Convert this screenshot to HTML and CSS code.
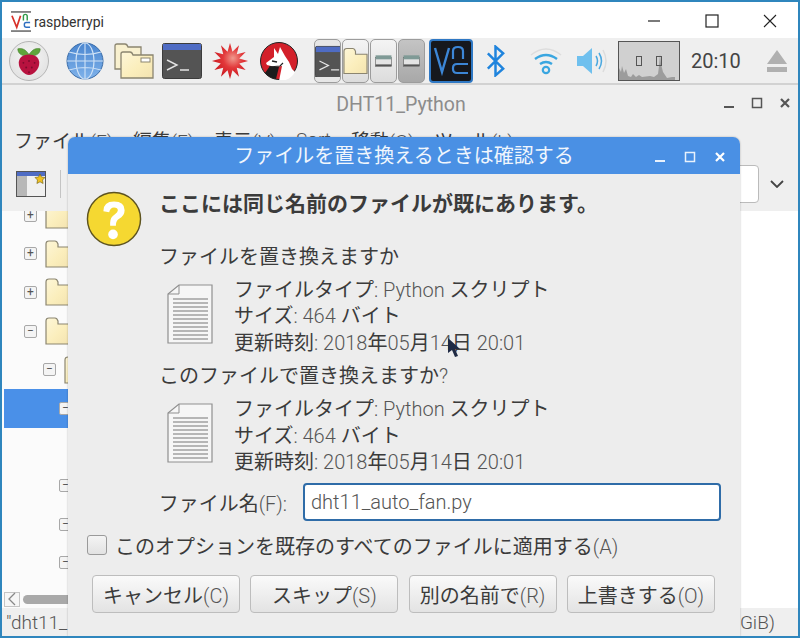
FILE: index.html
```html
<!DOCTYPE html>
<html lang="ja">
<head>
<meta charset="utf-8">
<title>raspberrypi</title>
<link rel="stylesheet" href="styles.css">
</head>
<body>
<svg class="defs" width="0" height="0">
  <defs>
    <linearGradient id="folderFill" x1="0" y1="0" x2="1" y2="1">
      <stop offset="0" stop-color="#fdf6d8"/><stop offset=".55" stop-color="#fbeebc"/><stop offset="1" stop-color="#f3e3b0"/>
    </linearGradient>
    <radialGradient id="starFill" cx=".58" cy=".42" r=".6">
      <stop offset="0" stop-color="#f09a8e"/><stop offset=".45" stop-color="#e2383a"/><stop offset="1" stop-color="#c8141c"/>
    </radialGradient>
    <linearGradient id="globeFill" x1="0" y1="0" x2="0" y2="1">
      <stop offset="0" stop-color="#4a86d0"/><stop offset="1" stop-color="#7fb2ea"/>
    </linearGradient>
    <symbol id="term" viewBox="0 0 40 36">
      <rect x=".5" y=".5" width="39" height="35" rx="2" fill="#545454" stroke="#3c3c3c"/>
      <rect x="1" y="1" width="38" height="6" fill="#4f6cc4"/>
      <path d="M5 17l10 5-10 5M18 27h9" fill="none" stroke="#e4e4e4" stroke-width="1.4"/>
    </symbol>
    <symbol id="folder" viewBox="0 0 26 28">
      <path d="M1 4q0-3 3-3h6q2 0 3 3v3h12v20H1z" fill="url(#folderFill)" stroke="#8b8570" stroke-width="1.2"/>
    </symbol>
    <symbol id="doc" viewBox="0 0 46 60">
      <path d="M12 1h33v58H1V10z" fill="#f6f6f6" stroke="#8f8f8f" stroke-width="1.2"/>
      <path d="M12 1v9H1" fill="none" stroke="#8f8f8f"/>
      <path d="M6 15h35M6 19h35M6 23h35M6 27h35M6 31h35M6 35h35M6 39h35M6 43h35M6 47h35M6 51h35M6 55h35" stroke="#777" stroke-width="1.1"/>
    </symbol>
    <symbol id="winfolder" viewBox="0 0 30 24">
      <rect x="1" y="6" width="28" height="16" fill="#e4e4e4" stroke="#555" stroke-width="1"/>
      <rect x="1" y="2" width="28" height="7" fill="#7f9a96"/>
      <rect x="1" y="18" width="28" height="3" fill="#555"/>
    </symbol>
  </defs>
</svg>

<div class="screen">
  <header class="host-title">
    <svg class="vnc-logo" viewBox="0 0 22 22" width="21" height="21">
      <path d="M0 1h21" stroke="#333" stroke-width="1.2"/>
      <path d="M0 21h21" stroke="#333" stroke-width="1.2"/>
      <path d="M1 5l5 12 4-12" fill="none" stroke="#d8322a" stroke-width="1.8"/>
      <path d="M13 10V5.500q0-2 2-2t2 2V10" fill="none" stroke="#2f9a48" stroke-width="1.5"/>
      <path d="M20 12h-4q-2 0-2 2v1q0 2 2 2h4" fill="none" stroke="#2e6fc0" stroke-width="1.5"/>
    </svg>
    <span class="host-name">raspberrypi</span>
    <div class="host-controls">
      <svg class="host-btn" viewBox="0 0 14 14" width="14" height="14"><path d="M1 7h12" stroke="#222" stroke-width="1.2"/></svg>
      <svg class="host-btn max" viewBox="0 0 14 14" width="14" height="14"><rect x="1" y="1" width="12" height="12" fill="none" stroke="#222" stroke-width="1.2"/></svg>
      <svg class="host-btn close" viewBox="0 0 14 14" width="14" height="14"><path d="M1 1l12 12M13 1L1 13" stroke="#222" stroke-width="1.1"/></svg>
    </div>
  </header>

  <nav class="panel">
    <span class="menu-btn">
      <svg viewBox="0 0 30 32" width="28" height="30">
        <path d="M15 9C11 3 7 2 3 3c0 5 4 8 12 8 8 0 12-3 12-8-4-1-8 0-12 6z" fill="#5fa53b" stroke="#3e7a28" stroke-width=".6"/>
        <path d="M15 9c-6 0-11 3-11 9 0 7 6 13 11 13s11-6 11-13c0-6-5-9-11-9z" fill="#b8123f"/>
        <g fill="#7d0b2c"><circle cx="15" cy="16" r="1"/><circle cx="9" cy="18" r="1"/><circle cx="21" cy="18" r="1"/><circle cx="12" cy="23" r="1"/><circle cx="18" cy="23" r="1"/><circle cx="15" cy="28" r="1"/></g>
      </svg>
    </span>
    <svg class="p-globe" viewBox="0 0 38 38" width="38" height="38">
      <circle cx="19" cy="19" r="18" fill="url(#globeFill)" stroke="#3a6ca8"/>
      <g fill="none" stroke="#cfe2f6" stroke-width="1.1"><ellipse cx="19" cy="19" rx="9" ry="18"/><path d="M19 1v36M3 10q16 5 32 0M1 19h36M3 28q16-5 32 0"/></g>
    </svg>
    <svg class="p-files" viewBox="0 0 40 36" width="40" height="36">
      <path d="M1 3q0-2 2-2h8q2 0 3 3h13v22H1z" fill="#f8f0cf" stroke="#8b8570" stroke-width="1.3"/>
      <path d="M7 11q0-2 2-2h7q2 0 3 3h20v23H7z" fill="url(#folderFill)" stroke="#8b8570" stroke-width="1.3"/>
      <rect x="27" y="15" width="9" height="4" fill="#fff" stroke="#8b8570"/>
    </svg>
    <svg class="p-term" width="40" height="36"><use href="#term"/></svg>
    <svg class="p-star" viewBox="0 0 40 40" width="38" height="38">
      <polygon fill="url(#starFill)" points="20,1 22.6,10.3 29.5,3.5 27.1,12.9 36.5,10.5 29.7,17.4 39,20 29.7,22.6 36.5,29.5 27.1,27.1 29.5,36.5 22.6,29.7 20,39 17.4,29.7 10.5,36.5 12.9,27.1 3.5,29.5 10.3,22.6 1,20 10.3,17.4 3.5,10.5 12.9,12.9 10.5,3.5 17.4,10.3"/>
    </svg>
    <svg class="p-wolf" viewBox="0 0 38 38" width="38" height="38">
      <circle cx="19" cy="19" r="18.500" fill="#d3202a" stroke="#222"/>
      <path d="M5 31l5-7 9 1-3 12q-7-1-11-6z" fill="#1c1c1c"/>
      <path d="M14 6l4 6 2-7 5 9 4 6 3 7 3 3q-5 9-16 9l2-10 1-5-7 1-8-2-1-2 8-6z" fill="#fff"/>
      <path d="M12 19l5 1" stroke="#222" stroke-width="1.400"/>
      <path d="M9 25l11-1 3-3" fill="none" stroke="#222" stroke-width="1.200"/>
    </svg>
    <span class="task first"><svg width="32" height="32" viewBox="0 0 28 32"><use href="#term" width="40" height="36" y="-1"/></svg></span>
    <span class="task second"><svg width="26" height="32"><use href="#folder"/></svg></span>
    <span class="task third"><svg width="17" height="14"><use href="#winfolder"/></svg></span>
    <span class="task fourth"><svg width="17" height="14"><use href="#winfolder"/></svg></span>
    <svg class="p-vnc" viewBox="0 0 44 44" width="44" height="44">
      <rect x="1" y="1" width="42" height="42" rx="3" fill="#16181d" stroke="#2f78c4" stroke-width="2"/>
      <path d="M6 9l7 24 7-24" fill="none" stroke="#3c86d6" stroke-width="2.400"/>
      <path d="M24 20v-8q0-4 5-4t5 4v8" fill="none" stroke="#3c86d6" stroke-width="2.200"/>
      <path d="M39 25H28q-4 0-4 4v1q0 4 4 4h11" fill="none" stroke="#3c86d6" stroke-width="2.200"/>
    </svg>
    <svg class="p-bt" viewBox="0 0 22 32" width="21" height="32">
      <path d="M3 8l16 16-8 7V1l8 7L3 24" fill="none" stroke="#1f84dd" stroke-width="2.600"/>
    </svg>
    <svg class="p-wifi" viewBox="0 0 32 30" width="32" height="30">
      <path d="M1 9q15-12 30 0" fill="none" stroke="#ddd" stroke-width="1.500"/>
      <path d="M5 13q11-8 22 0M10 18q6-4 12 0" fill="none" stroke="#3aa6e0" stroke-width="2.400"/>
      <circle cx="16" cy="24" r="3.200" fill="none" stroke="#3aa6e0" stroke-width="2.200"/>
    </svg>
    <svg class="p-vol" viewBox="0 0 32 28" width="32" height="28">
      <path d="M1 9h6l9-8v26l-9-8H1z" fill="#6fc0ee"/>
      <path d="M20 9q3 5 0 10M23 6q5 8 0 16" fill="none" stroke="#4aa8e0" stroke-width="1.500"/>
      <path d="M27 3q6 11 0 22" fill="none" stroke="#dcdcdc" stroke-width="1.500"/>
    </svg>
    <svg class="p-cpu" viewBox="0 0 62 40" width="62" height="40">
      <rect x=".5" y=".5" width="61" height="39" fill="#d0d0d0" stroke="#555"/>
      <path d="M1 39V27l2 4 1-6 2 7 2-4 2 7 3 1 2-3 3 3 3-2 3 2 8-1 4 1 4-3 1-8 1-12 1 10 2 8 2 3 2 3 5-1 3 0v3z" fill="#9c9c9c"/>
      <rect x="18.500" y="15.500" width="5" height="9" fill="none" stroke="#555"/>
      <rect x="38.500" y="15.500" width="5" height="9" fill="none" stroke="#555"/>
    </svg>
    <span class="clock">20:10</span>
    <svg class="p-eject" viewBox="0 0 22 24" width="22" height="24">
      <path d="M11 1l10 14H1z" fill="#b0b0b0"/>
      <rect x="1" y="18" width="20" height="5" fill="#b0b0b0"/>
    </svg>
  </nav>

  <main class="window">
    <div class="win-title">
      <span class="win-name">DHT11_Python</span>
      <div class="win-controls">
        <svg viewBox="0 0 12 12" width="12" height="12"><path d="M1 10h10" stroke="#555" stroke-width="2"/></svg>
        <svg viewBox="0 0 12 12" width="12" height="12"><rect x="1.500" y="1.500" width="9" height="9" fill="none" stroke="#555" stroke-width="1.500"/></svg>
        <svg viewBox="0 0 12 12" width="12" height="12"><path d="M2 2l8 8M10 2l-8 8" stroke="#555" stroke-width="2.200"/></svg>
      </div>
    </div>
    <div class="win-menu">
      <span class="m1">ファイル<span class="lat">(F)</span></span>
      <span class="m2">編集<span class="lat">(E)</span></span>
      <span class="m3">表示<span class="lat">(V)</span></span>
      <span class="m4 lat">Sort</span>
      <span class="m5">移動<span class="lat">(G)</span></span>
      <span class="m6">ツール<span class="lat">(L)</span></span>
    </div>
    <div class="win-toolbar">
      <svg viewBox="0 0 30 26" width="30" height="26">
        <rect x=".5" y=".5" width="29" height="25" fill="#f0f0f0" stroke="#555"/>
        <rect x="1" y="1" width="28" height="4" fill="#4f6cc4"/>
        <rect x="1" y="5" width="10" height="20" fill="#b8b8b8"/>
        <path d="M24 3l1.500 3 3.500.5-2.500 2.500.6 3.500-3.100-1.700-3.100 1.700.6-3.500L19 6.500l3.500-.5z" fill="#f0c020" stroke="#6a5a10" stroke-width=".6"/>
      </svg>
      <span class="tool-sep"></span>
      <span class="path-box"></span>
      <svg class="path-arrow" viewBox="0 0 14 8" width="14" height="8"><path d="M1 1l6 6 6-6" fill="none" stroke="#444" stroke-width="1.800"/></svg>
    </div>
    <div class="win-main">
      <div class="tree">
        <div class="tree-inner">
          <div class="row"><span class="exp">+</span><svg class="fold" width="26" height="28"><use href="#folder"/></svg></div>
          <div class="row"><span class="exp">+</span><svg class="fold" width="26" height="28"><use href="#folder"/></svg></div>
          <div class="row"><span class="exp">+</span><svg class="fold" width="26" height="28"><use href="#folder"/></svg></div>
          <div class="row"><span class="exp">−</span><svg class="fold" width="26" height="28"><use href="#folder"/></svg></div>
          <div class="row lvl2"><span class="exp">−</span><svg class="fold" width="26" height="28"><use href="#folder"/></svg></div>
          <div class="row lvl3 sel"><span class="exp">−</span></div>
          <div class="row"></div>
          <div class="row lvl3"><span class="exp">−</span></div>
          <div class="row lvl3"><span class="exp">−</span></div>
          <div class="row lvl3"><span class="exp">−</span></div>
        </div>
        <div class="hscroll">
          <span class="sb-btn"><svg viewBox="0 0 10 14" width="10" height="14"><path d="M8 1L2 7l6 6" fill="none" stroke="#888" stroke-width="1.300"/></svg></span>
          <span class="sb-thumb"></span>
        </div>
      </div>
      <div class="content"></div>
    </div>
    <div class="win-status">
      <span class="lat">"dht11_</span>
      <span class="lat">GiB)</span>
    </div>
  </main>

  <section class="dialog">
    <div class="dlg-title">
      <span class="dlg-name">ファイルを置き換えるときは確認する</span>
      <div class="dlg-controls">
        <svg viewBox="0 0 12 12" width="12" height="12"><path d="M1 10h10" stroke="#e8f1fc" stroke-width="2"/></svg>
        <svg viewBox="0 0 12 12" width="12" height="12"><rect x="1.500" y="1.500" width="9" height="9" fill="none" stroke="#e8f1fc" stroke-width="1.500"/></svg>
        <svg viewBox="0 0 12 12" width="12" height="12"><path d="M2 2l8 8M10 2l-8 8" stroke="#fff" stroke-width="2.200"/></svg>
      </div>
    </div>
    <div class="dlg-body">
      <div class="dlg-top">
        <svg class="q-icon" viewBox="0 0 58 58" width="56" height="56">
          <circle cx="29" cy="29" r="27.500" fill="#f5d831" stroke="#5d5320" stroke-width="1.500"/>
          <path d="M18 21q0-10 11-10t11 9q0 6-6 9-3 2-3 6v1h-6v-3q0-6 5-9 3-2 3-4 0-3-4-3t-5 5z" fill="#fff"/>
          <circle cx="28" cy="45" r="5" fill="#fff"/>
        </svg>
        <div class="dlg-text">
          <h1 class="heading">ここには同じ名前のファイルが既にあります。</h1>
          <p class="question q-first">ファイルを置き換えますか</p>
          <div class="fileinfo">
            <svg class="doc" width="46" height="60"><use href="#doc"/></svg>
            <div class="facts">
              <div>ファイルタイプ<span class="lat">: Python </span>スクリプト</div>
              <div>サイズ<span class="lat">: 464 </span>バイト</div>
              <div>更新時刻<span class="lat">: 2018</span>年<span class="lat">05</span>月<span class="lat">14</span>日<span class="lat"> 20:01</span></div>
            </div>
          </div>
          <p class="question q-second">このファイルで置き換えますか<span class="lat">?</span></p>
          <div class="fileinfo">
            <svg class="doc" width="46" height="60"><use href="#doc"/></svg>
            <div class="facts">
              <div>ファイルタイプ<span class="lat">: Python </span>スクリプト</div>
              <div>サイズ<span class="lat">: 464 </span>バイト</div>
              <div>更新時刻<span class="lat">: 2018</span>年<span class="lat">05</span>月<span class="lat">14</span>日<span class="lat"> 20:01</span></div>
            </div>
          </div>
        </div>
      </div>
      <div class="name-row">
        <label class="name-label">ファイル名<span class="lat">(F):</span></label>
        <div class="name-input lat">dht11_auto_fan.py</div>
      </div>
      <div class="check-row">
        <span class="check"></span>
        <span>このオプションを既存のすべてのファイルに適用する<span class="lat">(A)</span></span>
      </div>
      <div class="btn-row">
        <button class="btn">キャンセル<span class="lat">(C)</span></button>
        <button class="btn">スキップ<span class="lat">(S)</span></button>
        <button class="btn">別の名前で<span class="lat">(R)</span></button>
        <button class="btn">上書きする<span class="lat">(O)</span></button>
      </div>
    </div>
  </section>

  <svg class="cursor" viewBox="0 0 14 22" width="14" height="22">
    <path d="M1 1v15l4-3 3 7 3-1-3-7h5z" fill="#1f2a44"/>
  </svg>
</div>
</body>
</html>
```

FILE: styles.css
```css
* { box-sizing: border-box; }
html, body { margin: 0; padding: 0; }
body {
  width: 800px;
  height: 638px;
  overflow: hidden;
  font-family: Roboto, "Noto Sans CJK JP", sans-serif;
  font-size: 20px;
  color: #3b3b3b;
  background: #fff;
}
.defs { position: absolute; }
.lat { color: #555; font-weight: 300; }

.screen {
  position: relative;
  width: 800px;
  height: 638px;
  display: flex;
  flex-direction: column;
  border: 2px solid #2f86bd;
  overflow: hidden;
}

/* host title */
.host-title {
  height: 36px;
  flex: none;
  display: flex;
  align-items: center;
  background: #fff;
  padding-left: 9px;
}
.vnc-logo { flex: none; margin-top: 2px; }
.host-name { margin-left: 2px; font-size: 14px; line-height: 20px; color: #333; margin-top: 3px; }
.host-controls { margin-left: auto; display: flex; align-items: center; padding-right: 21px; margin-top: 2px; }
.host-btn { display: block; }
.host-btn.max { margin-left: 44px; }
.host-btn.close { margin-left: 44px; }

/* panel */
.panel {
  height: 47px;
  flex: none;
  display: flex;
  align-items: center;
  background: #efefef;
  border-bottom: 2px solid #d2d2d2;
}
.menu-btn {
  width: 40px;
  height: 40px;
  margin-left: 7px;
  flex: none;
  border-radius: 50%;
  background: radial-gradient(circle at 50% 40%, #f6f6f6, #dcdcdc);
  border: 1px solid #b5b5b5;
  display: flex;
  align-items: center;
  justify-content: center;
}
.panel > svg { flex: none; }
.p-globe { margin-left: 17px; }
.p-files { margin-left: 10px; }
.p-term { margin-left: 8px; }
.p-star { margin-left: 9px; }
.p-wolf { margin-left: 11px; }
.task {
  width: 27px;
  height: 44px;
  flex: none;
  margin-left: 1px;
  border: 1px solid #9c9c9c;
  border-radius: 5px;
  background: linear-gradient(#f4f4f4, #dcdcdc);
  display: flex;
  align-items: center;
  justify-content: center;
  overflow: hidden;
}
.task.first { margin-left: 16px; background: #e6e6e6; }
.task.fourth { background: linear-gradient(#c4c4c4, #a8a8a8); }
.p-vnc { margin-left: 4px; }
.p-bt { margin-left: 12px; }
.p-wifi { margin-left: 24px; }
.p-vol { margin-left: 14px; }
.p-cpu { margin-left: 10px; }
.clock { margin-left: 11px; font-size: 20px; color: #444; width: 52px; }
.p-eject { margin-left: 23px; }

/* background window */
.window {
  flex: 1;
  min-height: 0;
  display: flex;
  flex-direction: column;
  background: #efefef;
}
.win-title {
  height: 38px;
  flex: none;
  position: relative;
  display: flex;
  align-items: center;
  justify-content: center;
}
.win-name { font-size: 19.500px; color: #8c8c8c; padding-left: 2px; }
.win-controls {
  position: absolute;
  right: 7px;
  top: 12px;
  display: flex;
  gap: 16px;
}
.win-menu {
  height: 33px;
  flex: none;
  display: flex;
  align-items: center;
  padding-left: 12px;
  font-size: 19px;
  white-space: nowrap;
  gap: 20px;
}
.win-toolbar {
  height: 55px;
  flex: none;
  display: flex;
  align-items: center;
  padding-left: 14px;
  padding-right: 14px;
}
.tool-sep { width: 1px; height: 28px; background: #c4c4c4; margin-left: 14px; }
.path-box {
  flex: 1;
  height: 38px;
  margin-left: 10px;
  background: #fff;
  border: 1px solid #bbb;
  border-radius: 4px;
}
.path-arrow { margin-left: 11px; }

.win-main {
  flex: 1;
  min-height: 0;
  display: flex;
  background: #fff;
}
.tree {
  width: 738px;
  flex: none;
  display: flex;
  flex-direction: column;
  background: #fbfbfb;
  overflow: hidden;
  border-right: 1px solid #c8c8c8;
  min-height: 0;
}
.tree-inner {
  flex: 1;
  min-height: 0;
  margin-top: -15px;
  display: flex;
  flex-direction: column;
}
.row {
  height: 38.600px;
  flex: none;
  display: flex;
  align-items: center;
  padding-left: 22px;
}
.row.lvl2 { padding-left: 41px; }
.row.lvl3 { padding-left: 57px; }
.row.sel { background: #4a90e8; margin-left: 2px; padding-left: 55px; }
.exp {
  width: 13px;
  height: 13px;
  flex: none;
  border: 1px solid #a8a8a8;
  border-radius: 2px;
  background: #f4f4f4;
  font-size: 12px;
  line-height: 10px;
  text-align: center;
  color: #555;
}
.fold { margin-left: 8px; flex: none; }
.hscroll {
  height: 18px;
  flex: none;
  display: flex;
  align-items: center;
  padding-left: 2px;
}
.sb-btn {
  width: 16px;
  height: 15px;
  border: 1px solid #c4c4c4;
  background: #f6f6f6;
  display: flex;
  align-items: center;
  justify-content: center;
}
.sb-thumb { width: 300px; height: 9px; border-radius: 5px; background: #a9a9a9; margin-left: 3px; }
.content { flex: 1; background: #fff; }
.win-status {
  height: 28px;
  flex: none;
  display: flex;
  justify-content: space-between;
  align-items: center;
  padding: 0 23px 0 4px;
  font-size: 19px;
}

/* dialog */
.dialog {
  position: absolute;
  left: 66px;
  top: 135px;
  width: 672px;
  height: 499px;
  display: flex;
  flex-direction: column;
  background: #ededed;
  border-radius: 7px 7px 0 0;
  box-shadow: 0 0 2px rgba(0, 0, 0, .3);
}
.dlg-title {
  height: 37px;
  flex: none;
  position: relative;
  display: flex;
  align-items: center;
  justify-content: center;
  background: #4a90e4;
  border-radius: 7px 7px 0 0;
}
.dlg-name { color: #f0f6fd; font-size: 20px; line-height: 26px; }
.dlg-controls {
  position: absolute;
  right: 14px;
  top: 14px;
  display: flex;
  gap: 18px;
}
.dlg-body {
  flex: 1;
  min-height: 0;
  display: flex;
  flex-direction: column;
  padding-left: 19px;
}
.dlg-top { display: flex; height: 309px; flex: none; }
.q-icon { flex: none; margin-top: 17px; margin-left: -1px; }
.dlg-text { margin-left: 17px; }
.heading {
  margin: 0;
  padding-top: 15px;
  font-size: 21px;
  line-height: 30px;
  font-weight: 700;
  white-space: nowrap;
}
.question { margin: 0; line-height: 30px; white-space: nowrap; }
.q-first { margin-top: 23px; }
.q-second { margin-top: 5px; }
.fileinfo { display: flex; margin-top: 5px; }
.doc { flex: none; margin-left: 8px; margin-top: 7px; }
.facts { margin-left: 21px; line-height: 26.400px; white-space: nowrap; }

.name-row { display: flex; align-items: center; height: 38px; }
.name-label { width: 216px; text-align: right; padding-right: 16px; flex: none; }
.name-input {
  width: 418px;
  height: 38px;
  flex: none;
  background: #fff;
  border: 2px solid #2f6ca8;
  border-radius: 4px;
  padding-left: 6px;
  line-height: 34px;
}
.check-row {
  display: flex;
  align-items: center;
  margin-top: 8px;
  height: 32px;
  white-space: nowrap;
}
.check {
  width: 20px;
  height: 20px;
  border: 1px solid #9a9a9a;
  border-radius: 3px;
  background: linear-gradient(#f4f4f4, #e2e2e2);
  margin-right: 8px;
  flex: none;
}
.btn-row { display: flex; gap: 10.300px; margin-top: 14px; padding-left: 5px; }
.btn {
  width: 148px;
  height: 38px;
  padding: 1px 0 0;
  font: inherit;
  color: inherit;
  border: 1px solid #bdbdbd;
  border-radius: 4px;
  background: linear-gradient(#fafafa, #e3e3e3);
  white-space: nowrap;
}

.cursor { position: absolute; left: 445px; top: 335px; }
```
